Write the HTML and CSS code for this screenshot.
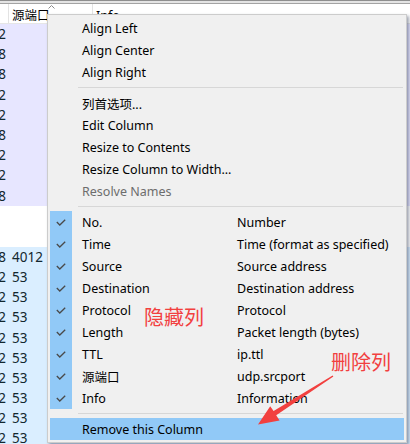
FILE: index.html
```html
<!DOCTYPE html>
<html>
<head>
<meta charset="utf-8">
<link rel="stylesheet" href="styles.css">
</head>
<body>
<div class="screen">
  <div class="topbar"></div>
  <div class="header">
    <div class="hcell c1"></div>
    <div class="hcell c2">源端口<svg class="sort" width="7" height="4" viewBox="0 0 7 4"><path d="M0.5 3.5 L3.5 0.5 L6.5 3.5" fill="none" stroke="#8a8a8a" stroke-width="1"/></svg></div>
    <div class="hcell c3">Info</div>
  </div>
  <div class="list">
    <div class="row tcp"><span class="c1">192.168.1.2</span><span class="c2"></span></div>
    <div class="row tcp"><span class="c1">192.168.1.8</span><span class="c2"></span></div>
    <div class="row tcp"><span class="c1">192.168.1.8</span><span class="c2"></span></div>
    <div class="row tcp"><span class="c1">192.168.1.2</span><span class="c2"></span></div>
    <div class="row tcp"><span class="c1">192.168.1.2</span><span class="c2"></span></div>
    <div class="row tcp"><span class="c1">192.168.1.8</span><span class="c2"></span></div>
    <div class="row tcp"><span class="c1">192.168.1.2</span><span class="c2"></span></div>
    <div class="row tcp"><span class="c1">192.168.1.2</span><span class="c2"></span></div>
    <div class="row tcp"><span class="c1">192.168.1.8</span><span class="c2"></span></div>
    <div class="gap"></div>
    <div class="row udp"><span class="c1">192.168.1.8</span><span class="c2">4012</span></div>
    <div class="row udp"><span class="c1">192.168.1.2</span><span class="c2">53</span></div>
    <div class="row udp"><span class="c1">192.168.1.2</span><span class="c2">53</span></div>
    <div class="row udp"><span class="c1">192.168.1.2</span><span class="c2">53</span></div>
    <div class="row udp"><span class="c1">192.168.1.2</span><span class="c2">53</span></div>
    <div class="row udp"><span class="c1">192.168.1.2</span><span class="c2">53</span></div>
    <div class="row udp"><span class="c1">192.168.1.2</span><span class="c2">53</span></div>
    <div class="row udp"><span class="c1">192.168.1.2</span><span class="c2">53</span></div>
    <div class="row udp"><span class="c1">192.168.1.2</span><span class="c2">53</span></div>
    <div class="row udp"><span class="c1">192.168.1.2</span><span class="c2">53</span></div>
  </div>

  <div class="menu">
    <div class="item"><span class="gut"></span><span class="lbl">Align Left</span></div>
    <div class="item"><span class="gut"></span><span class="lbl">Align Center</span></div>
    <div class="item"><span class="gut"></span><span class="lbl">Align Right</span></div>
    <div class="sep"></div>
    <div class="item"><span class="gut"></span><span class="lbl">列首选项...</span></div>
    <div class="item"><span class="gut"></span><span class="lbl">Edit Column</span></div>
    <div class="item"><span class="gut"></span><span class="lbl">Resize to Contents</span></div>
    <div class="item"><span class="gut"></span><span class="lbl">Resize Column to Width...</span></div>
    <div class="item dim"><span class="gut"></span><span class="lbl">Resolve Names</span></div>
    <div class="sep"></div>
    <div class="checks">
      <div class="item"><span class="gut on"><svg width="10" height="7" viewBox="0 0 10 7"><path d="M0.8 3 L3.8 6 L9.2 0.8" fill="none" stroke="#4a4a4a" stroke-width="1.3"/></svg></span><span class="lbl col">No.</span><span class="desc">Number</span></div>
      <div class="item"><span class="gut on"><svg width="10" height="7" viewBox="0 0 10 7"><path d="M0.8 3 L3.8 6 L9.2 0.8" fill="none" stroke="#4a4a4a" stroke-width="1.3"/></svg></span><span class="lbl col">Time</span><span class="desc">Time (format as specified)</span></div>
      <div class="item"><span class="gut on"><svg width="10" height="7" viewBox="0 0 10 7"><path d="M0.8 3 L3.8 6 L9.2 0.8" fill="none" stroke="#4a4a4a" stroke-width="1.3"/></svg></span><span class="lbl col">Source</span><span class="desc">Source address</span></div>
      <div class="item"><span class="gut on"><svg width="10" height="7" viewBox="0 0 10 7"><path d="M0.8 3 L3.8 6 L9.2 0.8" fill="none" stroke="#4a4a4a" stroke-width="1.3"/></svg></span><span class="lbl col">Destination</span><span class="desc">Destination address</span></div>
      <div class="item"><span class="gut on"><svg width="10" height="7" viewBox="0 0 10 7"><path d="M0.8 3 L3.8 6 L9.2 0.8" fill="none" stroke="#4a4a4a" stroke-width="1.3"/></svg></span><span class="lbl col">Protocol</span><span class="desc">Protocol</span></div>
      <div class="item"><span class="gut on"><svg width="10" height="7" viewBox="0 0 10 7"><path d="M0.8 3 L3.8 6 L9.2 0.8" fill="none" stroke="#4a4a4a" stroke-width="1.3"/></svg></span><span class="lbl col">Length</span><span class="desc">Packet length (bytes)</span></div>
      <div class="item"><span class="gut on"><svg width="10" height="7" viewBox="0 0 10 7"><path d="M0.8 3 L3.8 6 L9.2 0.8" fill="none" stroke="#4a4a4a" stroke-width="1.3"/></svg></span><span class="lbl col">TTL</span><span class="desc">ip.ttl</span></div>
      <div class="item"><span class="gut on"><svg width="10" height="7" viewBox="0 0 10 7"><path d="M0.8 3 L3.8 6 L9.2 0.8" fill="none" stroke="#4a4a4a" stroke-width="1.3"/></svg></span><span class="lbl col">源端口</span><span class="desc">udp.srcport</span></div>
      <div class="item"><span class="gut on"><svg width="10" height="7" viewBox="0 0 10 7"><path d="M0.8 3 L3.8 6 L9.2 0.8" fill="none" stroke="#4a4a4a" stroke-width="1.3"/></svg></span><span class="lbl col">Info</span><span class="desc">Information</span></div>
    </div>
    <div class="sep"></div>
    <div class="item hl"><span class="gut"></span><span class="lbl">Remove this Column</span></div>
  </div>

  <span class="note note-hide">隐藏列</span>
  <span class="note note-del">删除列</span>
  <svg class="arrow" width="410" height="444" viewBox="0 0 410 444">
    <polygon points="332.6,375.4 273.6,411.1 270.2,406.2 258,424.5 279.6,420.4 276.2,415.3 333.4,376.6" fill="#f2403f"/>
  </svg>
</div>
</body>
</html>
```
FILE: styles.css
```css
* { box-sizing: border-box; }
html, body { margin: 0; padding: 0; }
body {
  width: 410px;
  height: 444px;
  overflow: hidden;
  background: #ffffff;
  font-family: "Noto Sans", "Noto Sans CJK SC", sans-serif;
}
.screen {
  position: relative;
  width: 410px;
  height: 444px;
  overflow: hidden;
}
.topbar {
  height: 4px;
  border-top: 1px solid #8e8e8e;
  border-bottom: 1px solid #a3a3a3;
  background: #e4e4e4;
}
.header {
  display: flex;
  height: 20px;
  border-bottom: 1px solid #e6e6e6;
  background: #fff;
  font-size: 12.5px;
  color: #000;
}
.hcell {
  display: flex;
  align-items: center;
  border-right: 1px solid #e3e3e3;
  position: relative;
}
.header .c1 { width: 9px; }
.header .c2 { width: 84px; padding-left: 3px; padding-top: 2px; }
.header .c3 { flex: 1; padding-left: 3px; border-right: none; padding-top: 4px; }
.sort { position: absolute; left: 39px; top: 1px; }

.list { display: flex; flex-direction: column; }
.row {
  display: flex;
  height: 20.2px;
  align-items: center;
  font-size: 13.5px;
  color: #12272e;
}
.row.tcp { background: #e7e6ff; }
.row.udp { background: #daeeff; }
.gap { height: 41px; background: #fff; }
.row .c1 {
  width: 9px;
  flex: none;
  display: flex;
  justify-content: flex-end;
  overflow: hidden;
  white-space: nowrap;
  padding-right: 3px;
}
.row .c2 { padding-left: 3px; white-space: nowrap; }

.menu {
  position: absolute;
  left: 47px;
  top: 14px;
  width: 360px;
  padding: 2px;
  background: #f0f0f0;
  border: 1px solid #cccccc;
  box-shadow: 2px 2px 3px rgba(40, 50, 80, 0.45);
  font-size: 12.5px;
  color: #000;
}
.item {
  display: flex;
  align-items: center;
  height: 22px;
  white-space: nowrap;
}
.gut {
  width: 22px;
  height: 22px;
  flex: none;
  display: flex;
  align-items: center;
  justify-content: center;
}
.gut.on { background: #91c9f7; }
.lbl { margin-left: 10px; }
.lbl.col { width: 155px; flex: none; }
.dim { color: #6d6d6d; }
.sep {
  height: 9px;
  display: flex;
  align-items: center;
  padding-left: 28px;
  padding-right: 1px;
}
.sep::before {
  content: "";
  display: block;
  flex: 1;
  height: 1px;
  background: #d7d7d7;
}
.item.hl { background: #91c9f7; }

.note {
  position: absolute;
  font-size: 20px;
  line-height: 24px;
  color: #f2403f;
  font-family: "Noto Sans CJK SC", sans-serif;
}
.note-hide { left: 144px; top: 305px; }
.note-del { left: 331px; top: 350px; }
.arrow { position: absolute; left: 0; top: 0; }
```
